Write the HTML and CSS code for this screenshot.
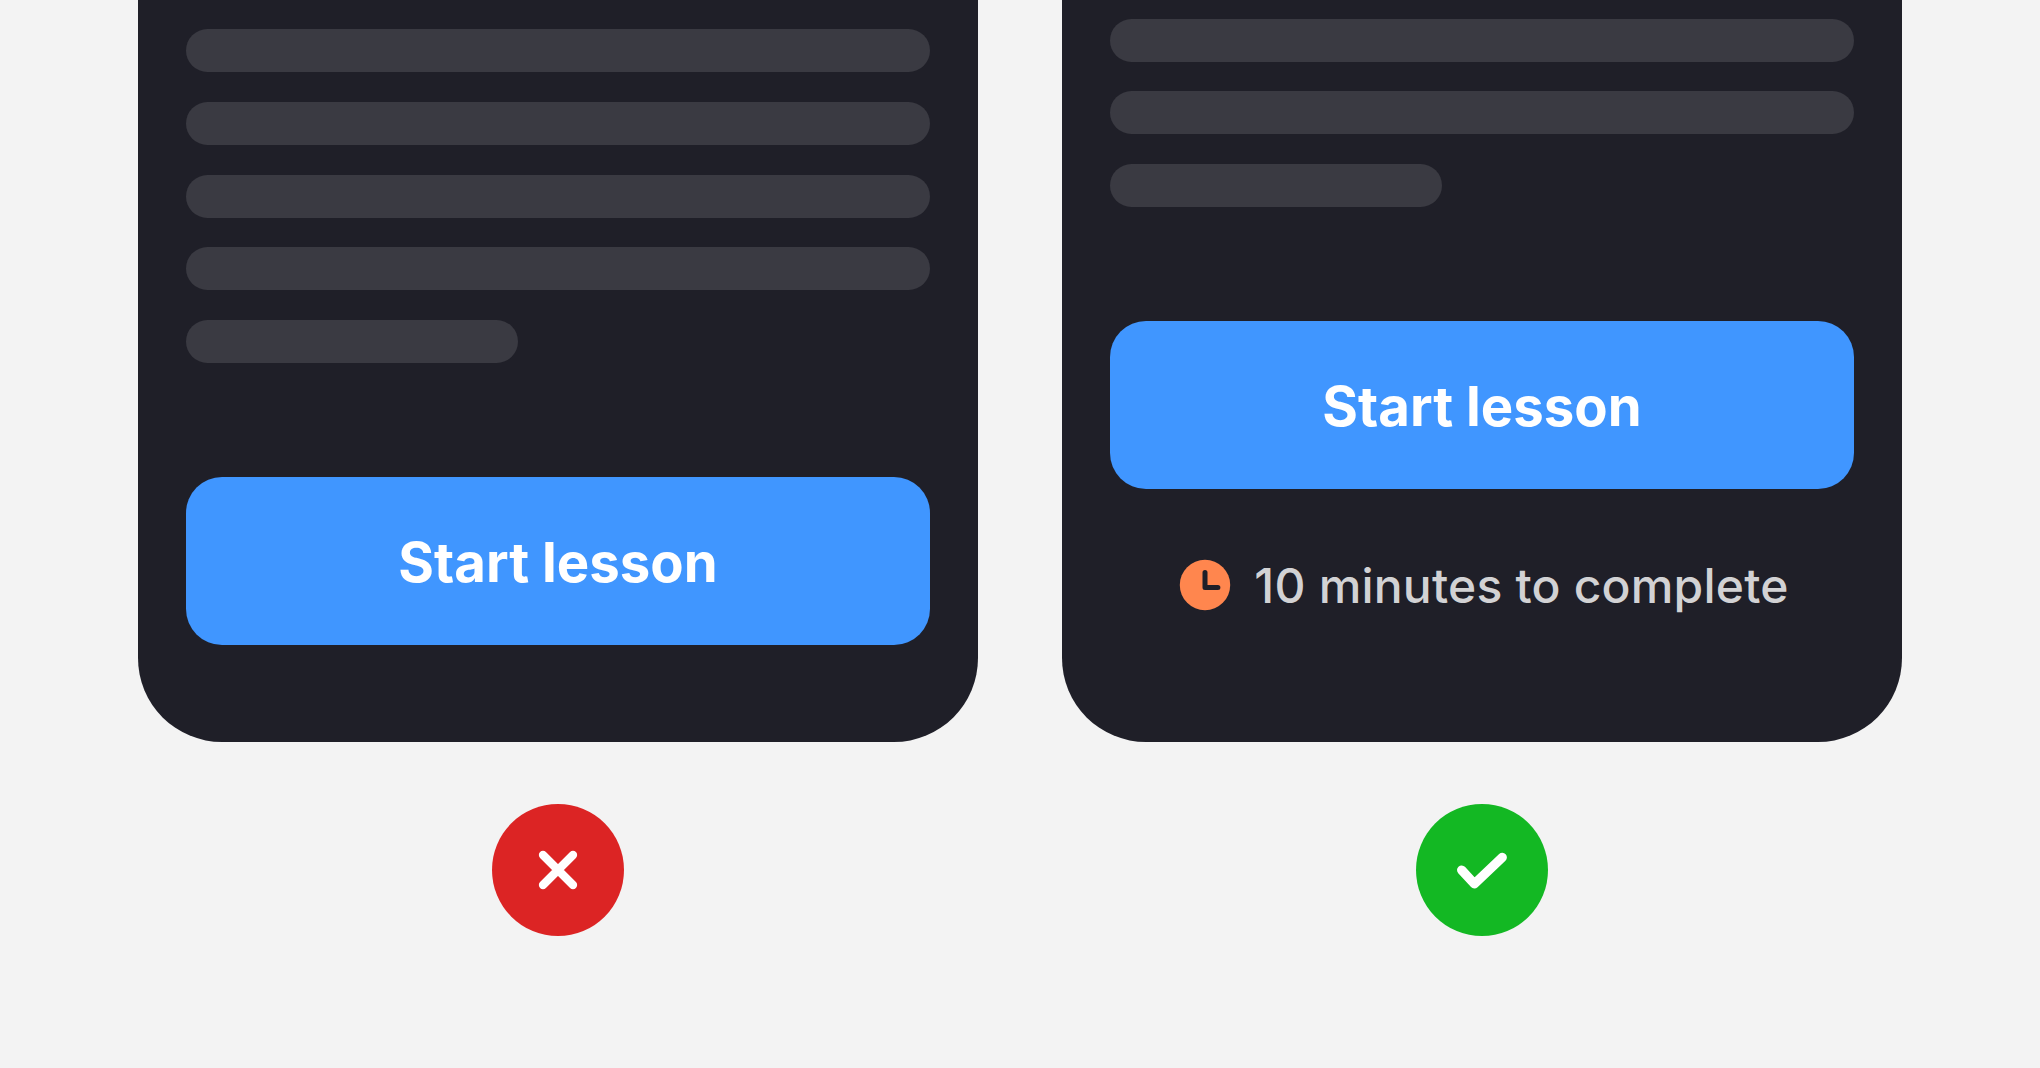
FILE: index.html
```html
<!DOCTYPE html>
<html lang="en">
<head>
<meta charset="UTF-8">
<meta name="viewport" content="width=device-width, initial-scale=1.0">
<title>Start lesson</title>
<link rel="stylesheet" href="styles.css">
</head>
<body>

<main class="comparison">

  <!-- Without time estimate -->
  <section class="example">
    <div class="card">
      <div class="lines">
        <div class="line"></div>
        <div class="line"></div>
        <div class="line"></div>
        <div class="line"></div>
        <div class="line short"></div>
      </div>
      <button class="start-btn">Start lesson</button>
    </div>
    <div class="badge bad">
      <svg viewBox="-66 -66 132 132">
        <path d="M-15 -15L15 15M15 -15L-15 15" stroke-width="8.3"/>
      </svg>
    </div>
  </section>

  <!-- With time estimate -->
  <section class="example">
    <div class="card with-note">
      <div class="lines">
        <div class="line"></div>
        <div class="line"></div>
        <div class="line short"></div>
      </div>
      <button class="start-btn">Start lesson</button>
      <div class="note">
        <svg class="clock" viewBox="0 0 60 60">
          <circle cx="30" cy="29" r="25.2"/>
          <path d="M30 16.4V31.5H42.9"/>
        </svg>
        <span>10 minutes to complete</span>
      </div>
    </div>
    <div class="badge good">
      <svg viewBox="-66 -66 132 132">
        <path d="M-20.4 0L-7.6 13.8L20.3 -12.6" stroke-width="9.2"/>
      </svg>
    </div>
  </section>

</main>

</body>
</html>
```
FILE: styles.css
```css
/* Reset */
* {
  margin: 0;
  padding: 0;
  box-sizing: border-box;
}
body {
  height: 100vh;
  overflow: hidden;
  background: #f3f3f3;
  font-family: Inter, "Liberation Sans", sans-serif;
}

.comparison {
  display: flex;
  justify-content: center;
  gap: 84px;
}
.example {
  display: flex;
  flex-direction: column;
  align-items: center;
  gap: 61.7px;
}

/* Card */
.card {
  width: 840px;
  height: 742.3px;
  padding: 0 48px 97.3px;
  display: flex;
  flex-direction: column;
  justify-content: flex-end;
  background: #1f1f28;
  border-radius: 0 0 84px 84px;
}
.card.with-note {
  padding-bottom: 127.3px;
}

/* Placeholder text */
.lines {
  display: flex;
  flex-direction: column;
  gap: 29.75px;
  margin-bottom: 113.9px;
}
.line {
  height: 43px;
  background: #3a3a42;
  border-radius: 22px;
}
.line.short {
  width: 331.5px;
}

/* Button */
.start-btn {
  height: 168px;
  padding-top: 3px;
  flex-shrink: 0;
  border: none;
  border-radius: 36px;
  background: #4096ff;
  color: #fff;
  font-family: inherit;
  font-size: 54.5px;
  font-weight: 700;
  line-height: 1;
}

/* Time note */
.note {
  display: flex;
  align-items: center;
  justify-content: center;
  gap: 19px;
  height: 58px;
  margin-top: 68px;
  color: #d2d2d4;
  font-size: 48px;
  font-weight: 500;
  line-height: 58px;
  letter-spacing: 0.2px;
  white-space: nowrap;
}
.clock {
  width: 60px;
  height: 60px;
}
.clock circle {
  fill: #ff864e;
}
.clock path {
  fill: none;
  stroke: #1f1f28;
  stroke-width: 5;
  stroke-linecap: round;
  stroke-linejoin: round;
}

/* Result badges */
.badge {
  width: 132px;
  height: 132px;
  border-radius: 50%;
}
.badge svg {
  display: block;
  fill: none;
  stroke: #fff;
  stroke-linecap: round;
  stroke-linejoin: round;
}
.bad {
  background: #dc2424;
}
.good {
  background: #13b823;
}
```
